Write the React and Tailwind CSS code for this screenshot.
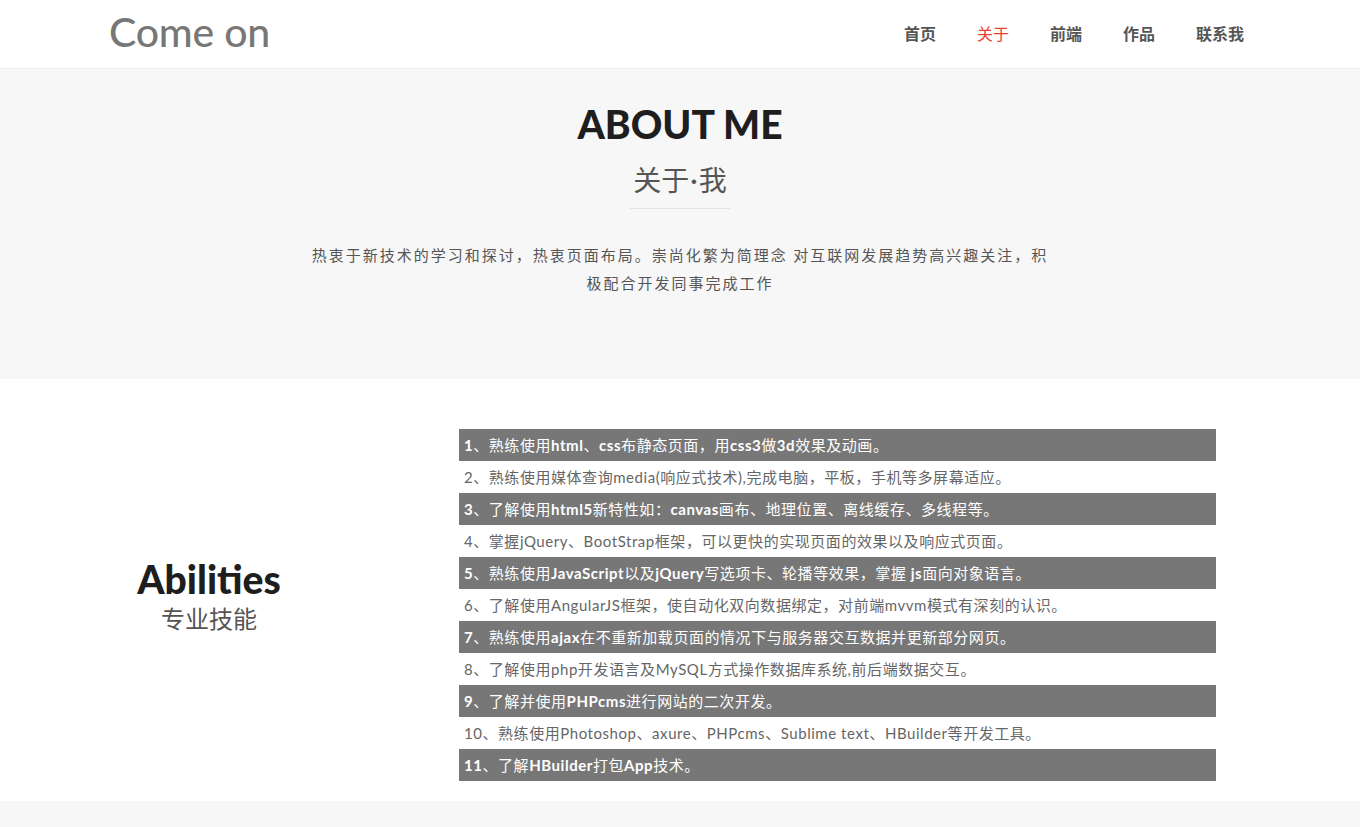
import React from 'react';

const latin = '"Lato", "Noto Sans CJK SC", sans-serif';
const cjk = '"Noto Sans CJK SC", sans-serif';

const skills = [
  '1、熟练使用html、css布静态页面，用css3做3d效果及动画。',
  '2、熟练使用媒体查询media(响应式技术),完成电脑，平板，手机等多屏幕适应。',
  '3、了解使用html5新特性如：canvas画布、地理位置、离线缓存、多线程等。',
  '4、掌握jQuery、BootStrap框架，可以更快的实现页面的效果以及响应式页面。',
  '5、熟练使用JavaScript以及jQuery写选项卡、轮播等效果，掌握 js面向对象语言。',
  '6、了解使用AngularJS框架，使自动化双向数据绑定，对前端mvvm模式有深刻的认识。',
  '7、熟练使用ajax在不重新加载页面的情况下与服务器交互数据并更新部分网页。',
  '8、了解使用php开发语言及MySQL方式操作数据库系统,前后端数据交互。',
  '9、了解并使用PHPcms进行网站的二次开发。',
  '10、熟练使用Photoshop、axure、PHPcms、Sublime text、HBuilder等开发工具。',
  '11、了解HBuilder打包App技术。',
];

function SkillText({ text, dark }) {
  // latin runs get the bold weight on the dark rows, chinese stays regular
  const parts = text.split(/([A-Za-z0-9 ]+)/).filter(Boolean);
  return parts.map((p, i) =>
    /[A-Za-z0-9]/.test(p) ? (
      <span key={i} className={dark ? 'font-bold' : ''}>{p}</span>
    ) : (
      <span key={i}>{p}</span>
    )
  );
}

export default function App() {
  return (
    <div className="min-h-[827px] bg-[#f7f7f7]" style={{ fontFamily: latin }}>
      <header className="h-[69px] bg-white border-b border-[#f0f0f0] flex items-center justify-between pl-[109px] pr-[116px]">
        <div className="text-[41px] font-medium text-[#777777] tracking-[-0.2px] leading-none pb-[5px]">Come on</div>
        <nav className="flex gap-[41px] text-[16px] font-bold text-[#555555] pb-[3px]" style={{ fontFamily: cjk }}>
          <span>首页</span>
          <span className="text-[#e8432e] font-normal">关于</span>
          <span>前端</span>
          <span>作品</span>
          <span>联系我</span>
        </nav>
      </header>

      <section className="h-[310px] bg-[#f7f7f7] flex flex-col items-center pt-[30px]">
        <h1 className="text-[39px] font-black text-[#1e1e1e] leading-[50px]">ABOUT ME</h1>
        <h2 className="text-[28px] text-[#555555] leading-[40px] mt-[10px]" style={{ fontFamily: cjk }}>
          关于<span style={{ fontFamily: '"Liberation Serif", serif' }} className="font-bold">·</span>我
        </h2>
        <div className="w-[100px] h-px bg-[#e2e2e2] mt-[6px]" />
        <p className="w-[748px] text-center text-[15px] tracking-[2px] text-[#555555] leading-[28px] mt-[32px]" style={{ fontFamily: cjk }}>
          热衷于新技术的学习和探讨，热衷页面布局。崇尚化繁为简理念 对互联网发展趋势高兴趣关注，积极配合开发同事完成工作
        </p>
      </section>

      <section className="bg-white pt-[50px] pb-[20px] flex items-center">
        <div className="w-[200px] ml-[109px] flex flex-col items-center pb-[16px]">
          <div className="text-[39px] font-black text-[#1e1e1e] leading-[40px]">Abilities</div>
          <div className="text-[24px] text-[#555555] leading-[34px] mt-[2px]" style={{ fontFamily: cjk }}>专业技能</div>
        </div>
        <ul className="w-[757px] ml-[150px] text-[15px] tracking-[0.55px]">
          {skills.map((s, i) => {
            const dark = i % 2 === 0;
            return (
              <li
                key={i}
                className={dark ? 'h-[32px] leading-[32px] px-[5px] bg-[#777777] text-white' : 'h-[32px] leading-[32px] px-[5px] bg-white text-[#666666]'}
              >
                <SkillText text={s} dark={dark} />
              </li>
            );
          })}
        </ul>
      </section>
    </div>
  );
}
